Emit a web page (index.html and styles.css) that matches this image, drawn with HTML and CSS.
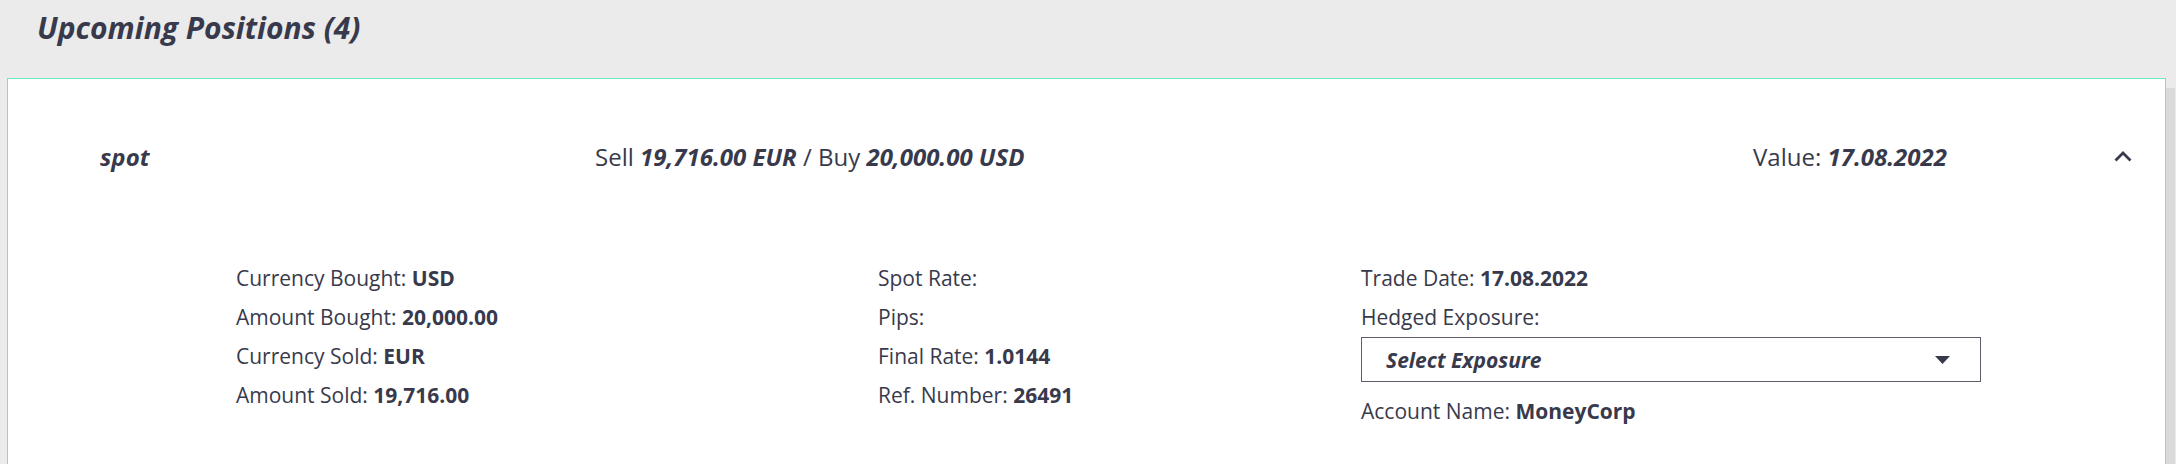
FILE: index.html
```html
<!DOCTYPE html>
<html>
<head>
<meta charset="utf-8">
<link rel="stylesheet" href="styles.css">
</head>
<body>
<div class="page">
  <h1 class="title">Upcoming Positions (4)</h1>
  <div class="card">
    <div class="summary">
      <div class="type">spot</div>
      <div class="deal">Sell <b><i>19,716.00 EUR</i></b> / Buy <b><i>20,000.00 USD</i></b></div>
      <div class="value">Value: <b><i>17.08.2022</i></b></div>
      <div class="toggle">
        <svg width="20" height="12" viewBox="0 0 20 12"><path d="M2.5 10.5 L10 3 L17.5 10.5" fill="none" stroke="#383a4c" stroke-width="2.8"/></svg>
      </div>
    </div>
    <div class="details">
      <div class="col col1">
        <div class="line">Currency Bought: <b>USD</b></div>
        <div class="line">Amount Bought: <b>20,000.00</b></div>
        <div class="line">Currency Sold: <b>EUR</b></div>
        <div class="line">Amount Sold: <b>19,716.00</b></div>
      </div>
      <div class="col col2">
        <div class="line">Spot Rate:</div>
        <div class="line">Pips:</div>
        <div class="line">Final Rate: <b>1.0144</b></div>
        <div class="line">Ref. Number: <b>26491</b></div>
      </div>
      <div class="col col3">
        <div class="line">Trade Date: <b>17.08.2022</b></div>
        <div class="line">Hedged Exposure:</div>
        <div class="select">
          <span>Select Exposure</span>
          <svg width="15" height="8" viewBox="0 0 15 8"><path d="M0 0 H15 L7.5 8 Z" fill="#383a4c"/></svg>
        </div>
        <div class="line account">Account Name: <b>MoneyCorp</b></div>
      </div>
    </div>
  </div>
</div>
</body>
</html>
```

FILE: styles.css
```css
html, body {
  margin: 0;
  padding: 0;
  background: #ebebeb;
  height: 100%;
  overflow: hidden;
}
body {
  font-family: "Open Sans", "Liberation Sans", sans-serif;
  color: #383a4c;
}
.page {
  display: flex;
  flex-direction: column;
}
.title {
  margin: 0;
  height: 78px;
  padding: 0 0 0 37px;
  font-size: 30px;
  font-weight: 700;
  font-style: italic;
  line-height: 56px;
  color: #383a4c;
}
.card {
  margin-left: 7px;
  margin-right: 10px;
  background: #fff;
  border: 1px solid #6ee8c0;
  border-bottom: none;
  box-shadow: 9px 10px 0 #dadada;
  height: 400px;
}
.summary {
  display: grid;
  grid-template-columns: 587px 1158px 360px 1fr;
  align-items: center;
  height: 154px;
  font-size: 24px;
}
.summary .type {
  padding-left: 92px;
  font-weight: 700;
  font-style: italic;
}
.summary .toggle {
  display: flex;
  align-items: center;
  margin-top: -1px;
}
.details {
  display: grid;
  grid-template-columns: 642px 483px 620px;
  padding: 26px 0 0 228px;
  font-size: 21px;
}
.line {
  height: 39px;
  line-height: 39px;
  white-space: nowrap;
}
.line b { font-weight: 700; }
.select {
  box-sizing: border-box;
  width: 620px;
  height: 45px;
  border: 1px solid #5c5e6c;
  display: flex;
  align-items: center;
  justify-content: space-between;
  padding: 0 30px 0 24px;
  font-weight: 700;
  font-style: italic;
  font-size: 21px;
}
.account {
  margin-top: 10px;
}
```
